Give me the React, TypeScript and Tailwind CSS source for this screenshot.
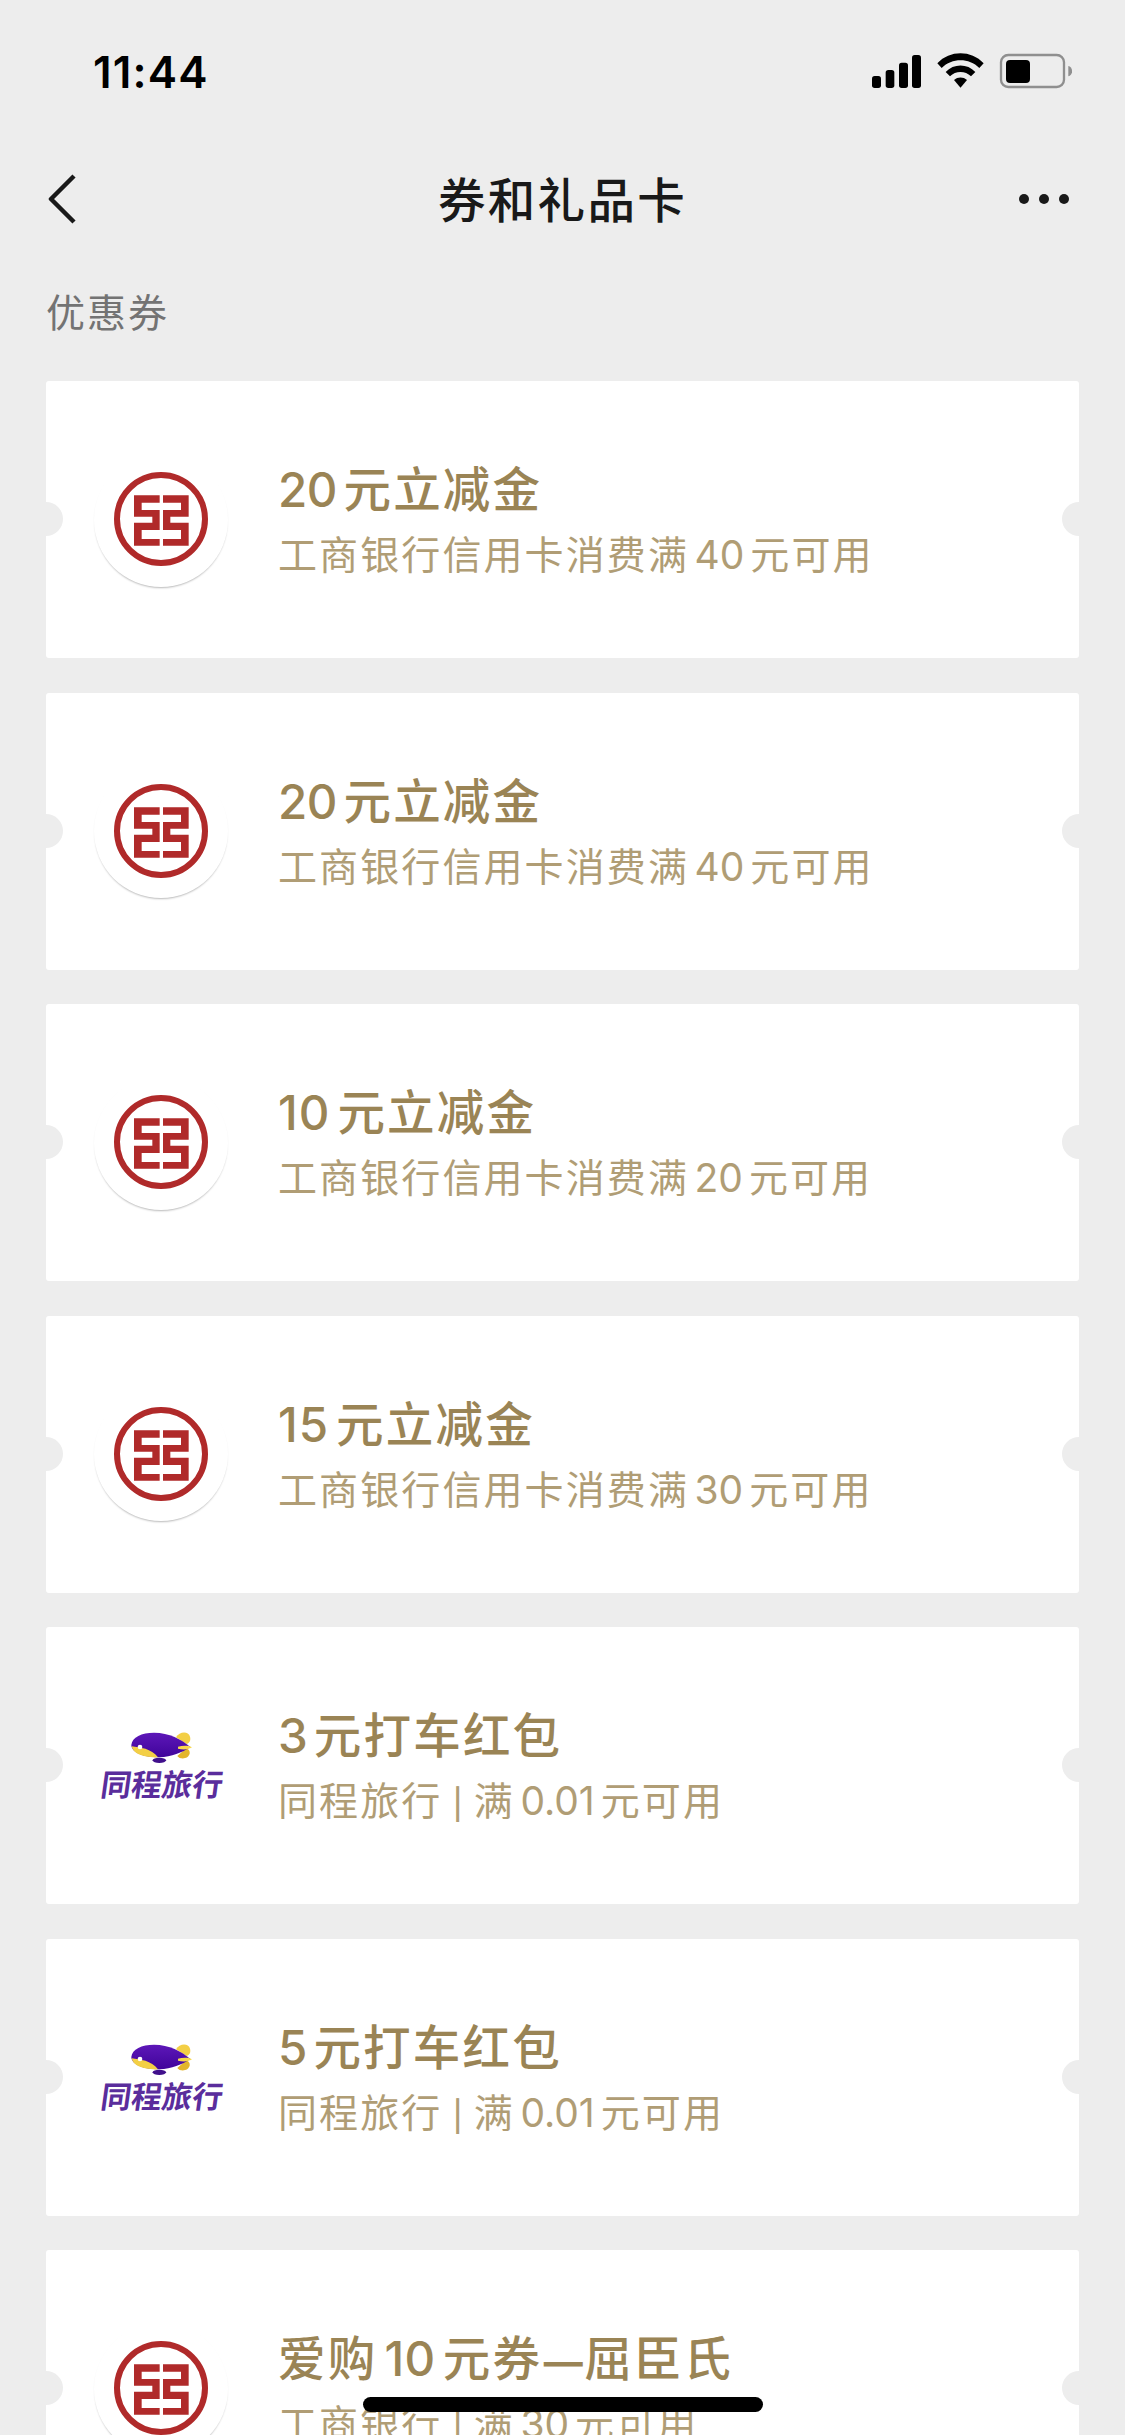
type Coupon = { title: string; detail: string; brand: 'bank' | 'travel' };

const coupons: Coupon[] = [
  { title: '20元立减金', detail: '工商银行信用卡消费满40元可用', brand: 'bank' },
  { title: '20元立减金', detail: '工商银行信用卡消费满40元可用', brand: 'bank' },
  { title: '10元立减金', detail: '工商银行信用卡消费满20元可用', brand: 'bank' },
  { title: '15元立减金', detail: '工商银行信用卡消费满30元可用', brand: 'bank' },
  { title: '3元打车红包', detail: '同程旅行 | 满0.01元可用', brand: 'travel' },
  { title: '5元打车红包', detail: '同程旅行 | 满0.01元可用', brand: 'travel' },
  { title: '爱购10元券—屈臣氏', detail: '工商银行 | 满30元可用', brand: 'bank' },
];

function BankLogo() {
  return (
    <div className="flex size-[134px] items-center justify-center rounded-full bg-white shadow-[0_2px_2px_-1px_rgba(0,0,0,0.28)]">
      <svg className="-mt-px" width="94" height="94" viewBox="223 306 282 282" fill="#b02a2a">
        <circle cx="364" cy="447" r="132" fill="none" stroke="#b02a2a" strokeWidth="18" />
        <path d="M283 376H360V398H306V420H360V480H306V507H360V527H283V458H338V440H283Z" />
        <path d="M447 376H370V398H424V420H370V480H424V507H370V527H447V458H392V440H447Z" />
      </svg>
    </div>
  );
}

function TravelLogo() {
  return (
    <div className="flex w-[134px] flex-col items-center pt-[4px]">
      <svg width="61" height="31" viewBox="153 96 183 93">
        <defs>
          <linearGradient id="hull" x1="0" y1="0" x2="0" y2="1">
            <stop offset="0" stopColor="#5d17b8" />
            <stop offset="1" stopColor="#40049b" />
          </linearGradient>
        </defs>
        <path d="M288 112C298 94 325 92 330 110C333 121 329 128 320 132Z" fill="#f3cf45" />
        <path d="M292 168C300 180 326 178 329 160C330 151 324 147 318 145Z" fill="#e3b52c" />
        <ellipse cx="238" cy="181" rx="20" ry="8" fill="#40108c" />
        <path d="M154 135C156 111 185 98 222 98C268 98 304 118 331 141C306 158 275 170 238 172C190 172 155 158 154 135Z" fill="url(#hull)" />
        <path d="M155 139C180 142 214 146 234 172C190 174 158 160 155 139Z" fill="#f3cf45" />
        <path d="M294 140C307 137 323 135 336 142C323 150 307 149 294 146Z" fill="#f8d94c" />
        <circle cx="180" cy="141" r="7" fill="#fff" />
      </svg>
      <div className="mt-[4px] ml-[2px] -skew-x-8 text-[30.5px] leading-[36px] font-bold whitespace-nowrap text-[#5a2d9c]">同程旅行</div>
    </div>
  );
}

/* Numbers, dashes and separators keep their own spacing beside Chinese characters. */
function Spaced({ text, digitsFirst, digits }: { text: string; digitsFirst: string; digits: string }) {
  return (
    <>
      {text.split(/([0-9.]+|—| \| )/).filter(Boolean).map((run, i) => {
        if (/^[0-9.]+$/.test(run)) return <span key={i} className={i === 0 ? digitsFirst : digits}>{run}</span>;
        if (run === '—') return <span key={i} className="mx-[1.5px] text-[39px] font-bold tracking-[0]">{run}</span>;
        if (run === ' | ') return <span key={i} className="mr-[11px] ml-[10px] text-[30px] font-medium tracking-[0]">|</span>;
        return <span key={i}>{run}</span>;
      })}
    </>
  );
}

function CouponCard({ coupon }: { coupon: Coupon }) {
  return (
    <li className="relative flex h-[277px] shrink-0 items-center overflow-hidden rounded-[3px] bg-white pl-[48px]">
      <span className="absolute top-[121px] -left-[17px] size-[34px] rounded-full bg-[#ededed]" />
      <span className="absolute top-[121px] -right-[17px] size-[34px] rounded-full bg-[#ededed]" />
      {coupon.brand === 'bank' ? <BankLogo /> : <TravelLogo />}
      <div className="ml-[50px] pt-[3px] whitespace-nowrap">
        <h2 className="h-[66px] text-[47.5px] leading-[67px] font-medium tracking-[2.2px] text-[#9a8455]">
          <Spaced
            text={coupon.title}
            digitsFirst={coupon.title.startsWith('1') ? 'mr-[7px] tracking-[1px]' : 'mr-[6.5px] tracking-[-0.5px]'}
            digits="mr-[7px] ml-[7px] tracking-[0.5px]"
          />
        </h2>
        <p className="h-[64px] text-[39px] leading-[65px] tracking-[2.1px] text-[#b09d75]">
          <Spaced text={coupon.detail} digitsFirst="mr-[6px] tracking-[0]" digits="mr-[6px] ml-[5.5px] tracking-[0]" />
        </p>
      </div>
    </li>
  );
}

function StatusBar() {
  return (
    <header className="flex h-[132px] shrink-0 items-center justify-between pt-[12px] pr-[53px] pl-[93px]">
      <time className="text-[44px] leading-none font-semibold tracking-[1.2px] text-black">11:44</time>
      <svg className="mb-[2px]" width="201" height="36" viewBox="0 0 603 108">
        <g fill="#000">
          <rect x="3" y="69" width="27" height="36" rx="8" />
          <rect x="44" y="51" width="26" height="54" rx="8" />
          <rect x="84" y="29" width="27" height="76" rx="8" />
          <rect x="123" y="6" width="27" height="99" rx="8" />
          <path d="M199 31C237 -9 300 -9 338 31L325 45C294 14 243 14 212 45Z" />
          <path d="M224 57C248 31 289 31 313 57L300 70C283 53 254 53 237 70Z" />
          <path d="M249 81C260 71 277 71 288 81L268.500 104Z" />
        </g>
        <rect x="390" y="6" width="189" height="96" rx="22" fill="none" stroke="#8f8f8f" strokeWidth="7" />
        <rect x="405" y="21" width="72" height="69" rx="12" />
        <path d="M592 39C607 43 607 66 592 70Z" fill="#8f8f8f" />
      </svg>
    </header>
  );
}

export default function App() {
  return (
    <div className="relative flex h-[2435px] w-[1125px] flex-col overflow-hidden bg-[#ededed] font-['Inter','Noto_Sans_CJK_SC',sans-serif]">
      <StatusBar />
      <nav className="grid h-[134px] shrink-0 grid-cols-3 items-center pr-[56px] pl-[48px]">
        <svg width="28" height="50" viewBox="0 0 28 50" fill="none" stroke="#191919" strokeWidth="4.500">
          <path d="M26 2L3 25L26 48" strokeLinejoin="round" />
        </svg>
        <h1 className="pt-[3px] pl-[8px] text-center text-[47.5px] font-medium tracking-[2.3px] whitespace-nowrap text-[#191919]">券和礼品卡</h1>
        <div className="flex justify-end gap-[10px]">
          <span className="size-[10px] rounded-full bg-[#191919]" />
          <span className="size-[10px] rounded-full bg-[#191919]" />
          <span className="size-[10px] rounded-full bg-[#191919]" />
        </div>
      </nav>
      <main className="flex shrink-0 flex-col px-[46px]">
        <h3 className="h-[115px] pt-[18px] text-[39px] leading-[58px] tracking-[2px] text-[#737373]">优惠券</h3>
        <ul className="flex flex-col gap-[34.5px]">
          {coupons.map((coupon, i) => <CouponCard key={i} coupon={coupon} />)}
        </ul>
      </main>
      <div className="absolute bottom-[23px] left-[363px] h-[15px] w-[400px] rounded-full bg-black" />
    </div>
  );
}
